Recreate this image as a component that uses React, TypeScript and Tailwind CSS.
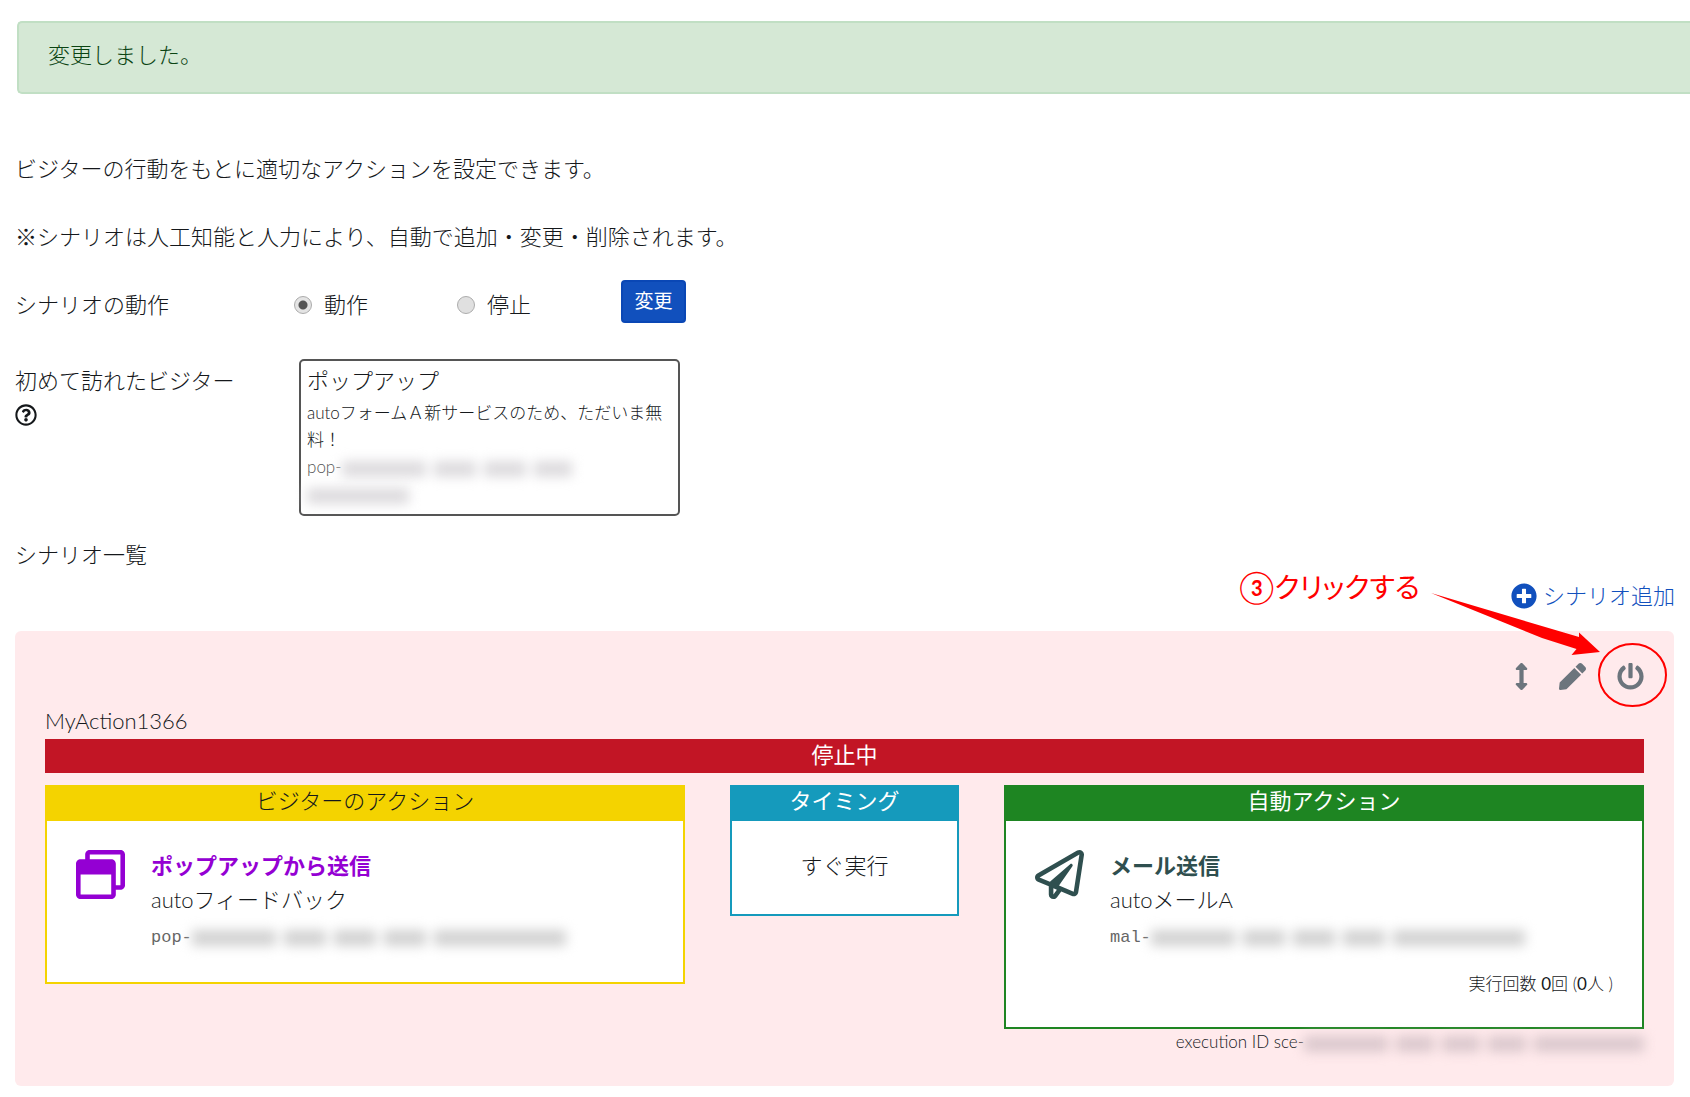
import type { ReactNode } from "react";
import {
  FaArrowsAltV,
  FaPen,
  FaPlusCircle,
  FaPowerOff,
  FaRegPaperPlane,
  FaRegQuestionCircle,
  FaRegWindowRestore,
} from "react-icons/fa";

// Hidden part of an id: a run of blurred blocks, one per id segment.
function Masked({ segments, tone }: { segments: number[]; tone: string }) {
  return (
    <span aria-hidden="true" className="inline-flex items-center gap-[8px] align-middle blur-[6px]">
      {segments.map((width, i) => (
        <span key={i} className={`h-[16px] ${tone}`} style={{ width }} />
      ))}
    </span>
  );
}

type CardProps = {
  title: string;
  frame: string;
  head: string;
  children: ReactNode;
};

function Card({ title, frame, head, children }: CardProps) {
  return (
    <div className={`border-2 bg-white ${frame}`}>
      <h3 className={`h-[34px] text-center leading-[28px] ${head}`}>{title}</h3>
      {children}
    </div>
  );
}

type ActionProps = {
  icon: ReactNode;
  title: string;
  color: string;
  name: string;
  prefix: string;
  segments: number[];
};

function Action({ icon, title, color, name, prefix, segments }: ActionProps) {
  return (
    <div className={`flex gap-[26px] ${color}`}>
      <div className="pt-[1px] text-[49px]">{icon}</div>
      <div>
        <p className="font-bold">{title}</p>
        <p className="text-[#15181b]">{name}</p>
        <p className="pt-[4px] font-['Liberation_Mono',monospace] text-[17px] text-[#666]">
          {prefix}
          <Masked segments={segments} tone="bg-[#d2d2d2]" />
        </p>
      </div>
    </div>
  );
}

export default function App() {
  return (
    <main className="overflow-x-hidden bg-white pt-[21px] pb-[11px] font-['Lato','Noto_Sans_CJK_JP',sans-serif] text-[22px] leading-[34px] font-light text-[#15181b]">
      <div role="alert" className="ml-[17px] rounded-l-[5px] border-2 border-r-0 border-[#c1dfc4] bg-[#d5e8d5] px-[29px] pt-[15px] pb-[20px] text-[#0b4413]">
        変更しました。
      </div>

      <div className="px-[15px]">
        <p className="mt-[58px]">ビジターの行動をもとに適切なアクションを設定できます。</p>
        <p className="mt-[34px]">※シナリオは人工知能と人力により、自動で追加・変更・削除されます。</p>

        <form className="mt-[26px] flex items-start" onSubmit={(e) => e.preventDefault()}>
          <span className="w-[279px] pt-[8px]">シナリオの動作</span>
          <label className="flex w-[163px] items-center gap-[12px] pt-[8px]">
            <input type="radio" name="scenario" defaultChecked className="size-[18px] appearance-none rounded-full border border-[#acacac] bg-[#e4e4e4] bg-[radial-gradient(circle,#555_0_4px,transparent_5px)]" />
            動作
          </label>
          <label className="flex w-[164px] items-center gap-[12px] pt-[8px]">
            <input type="radio" name="scenario" className="size-[18px] appearance-none rounded-full border border-[#acacac] bg-[#e0e0e0]" />
            停止
          </label>
          <button className="h-[43px] w-[65px] rounded-[4px] border-2 border-[#0a47b5] bg-[#1150bd] pb-[2px] text-[19px] font-normal text-white">
            変更
          </button>
        </form>

        <div className="mt-[36px] flex items-start">
          <div className="w-[284px] pt-[5px]">
            <p>初めて訪れたビジター</p>
            <button aria-label="ヘルプ" className="flex h-[34px] items-center">
              <FaRegQuestionCircle className="size-[22px]" />
            </button>
          </div>
          <div className="w-[381px] rounded-[5px] border-2 border-[#555] px-[6px] pt-[3px] pb-[7px]">
            <p>ポップアップ</p>
            <div className="pt-[1px] text-[17px] leading-[27px]">
              <p>autoフォームＡ新サービスのため、ただいま無料！</p>
              <p className="text-[#555]">
                pop-
                <Masked segments={[84, 42, 42, 38]} tone="bg-[#dddbde]" />
              </p>
              <p>
                <Masked segments={[102]} tone="bg-[#dddbde]" />
              </p>
            </div>
          </div>
        </div>

        <h2 className="mt-[22px]">シナリオ一覧</h2>

        <div className="mt-[7px] flex justify-end">
          <a href="#add" className="flex items-center gap-[6px] text-[#1150bd]">
            <FaPlusCircle className="size-[26px]" />
            シナリオ追加
          </a>
        </div>

        <section className="relative mt-[18px] mr-[1px] rounded-[6px] bg-[#ffeaec] px-[30px] pt-[28px] pb-[32px]">
          <div className="flex h-[34px] items-center justify-end text-[27px] text-[#6c757d]">
            <button aria-label="並べ替え" className="mr-[24px]">
              <FaArrowsAltV />
            </button>
            <button aria-label="編集" className="mr-[31px]">
              <FaPen />
            </button>
            <button aria-label="停止の切り替え">
              <FaPowerOff />
            </button>
          </div>

          <p className="mt-[11px]">MyAction1366</p>
          <p className="mt-[1px] bg-[#c21525] pb-[2px] text-center leading-[32px] font-normal text-white">停止中</p>

          <div className="mt-[12px] grid grid-cols-12 items-start gap-x-[45px]">
            <div className="col-span-5">
              <Card title="ビジターのアクション" frame="border-[#f4d300]" head="bg-[#f4d300]">
                <div className="px-[29px] pt-[28px] pb-[27px]">
                  <Action
                    icon={<FaRegWindowRestore />}
                    title="ポップアップから送信"
                    color="text-[#9400d3]"
                    name="autoフィードバック"
                    prefix="pop-"
                    segments={[84, 42, 42, 42, 132]}
                  />
                </div>
              </Card>
            </div>

            <div className="col-span-2">
              <Card title="タイミング" frame="border-[#159abc]" head="bg-[#159abc] font-normal text-white">
                <p className="pt-[28px] pb-[31px] text-center">すぐ実行</p>
              </Card>
            </div>

            <div className="col-span-5">
              <Card title="自動アクション" frame="border-[#1e8522]" head="bg-[#1e8522] font-normal text-white">
                <div className="px-[29px] pt-[28px] pb-[26px]">
                  <Action
                    icon={<FaRegPaperPlane />}
                    title="メール送信"
                    color="text-[#2f4f4f]"
                    name="autoメールA"
                    prefix="mal-"
                    segments={[84, 42, 42, 42, 132]}
                  />
                  <p className="mt-[12px] text-right text-[17px]">
                    実行回数 <b>0</b>回 (<b>0</b>人 )
                  </p>
                </div>
              </Card>
              <p className="text-right text-[17px] leading-[25px]">
                execution ID sce-
                <Masked segments={[84, 38, 38, 38, 110]} tone="bg-[#dbc8cd]" />
              </p>
            </div>
          </div>

          {/* Step callout drawn over the toolbar */}
          <p className="absolute top-[-61px] right-[254px] flex items-center text-[28px] font-normal whitespace-nowrap text-[#f00]">
            <span className="text-[32px]">③</span>
            <span className="[font-feature-settings:'palt']">クリックする</span>
          </p>
          <svg aria-hidden="true" viewBox="0 0 244 120" className="pointer-events-none absolute top-[-41px] right-[5px] h-[120px] w-[244px]">
            <path d="M6 3 L154 47 V42.500 L175 62 L146.500 65 L151.500 59 L117 48 Z" fill="#f00" />
            <ellipse cx="207.500" cy="85" rx="33.500" ry="31" fill="none" stroke="#f00" strokeWidth="2" />
          </svg>
        </section>
      </div>
    </main>
  );
}
